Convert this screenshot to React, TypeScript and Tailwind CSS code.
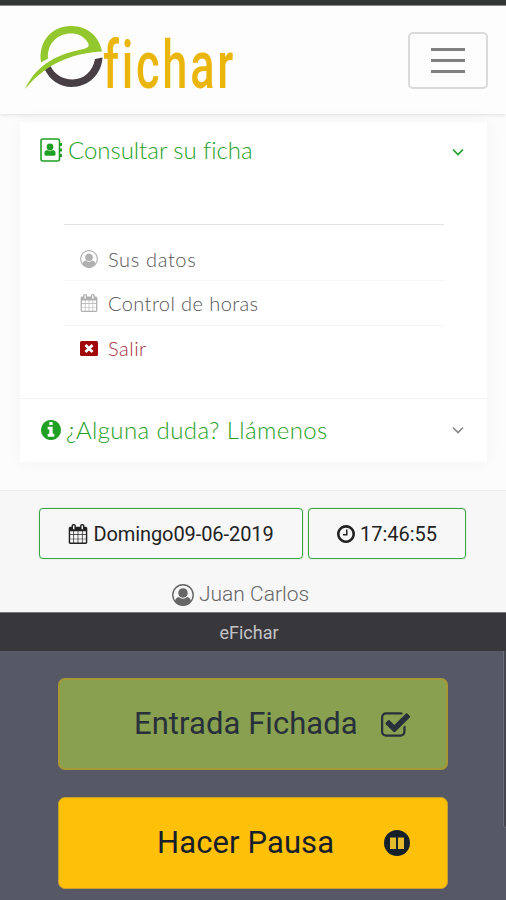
import React from 'react';

interface IconProps {
  className?: string;
}

const CalendarIcon: React.FC<IconProps> = ({ className }) => (
  <svg viewBox="0 0 1792 1792" fill="currentColor" className={className}>
    <path d="M192 1664h288v-288h-288v288zm352 0h320v-288h-320v288zm-352-352h288v-320h-288v320zm352 0h320v-320h-320v320zm-352-384h288v-288h-288v288zm736 736h320v-288h-320v288zm-384-736h320v-288h-320v288zm768 736h288v-288h-288v288zm-384-352h320v-320h-320v320zm-352-864v-288q0-13-9.500-22.500t-22.500-9.500h-64q-13 0-22.500 9.500t-9.500 22.500v288q0 13 9.500 22.500t22.500 9.500h64q13 0 22.500-9.500t9.500-22.500zm736 864h288v-320h-288v320zm-384-384h320v-288h-320v288zm384 0h288v-288h-288v288zm32-480v-288q0-13-9.500-22.500t-22.500-9.500h-64q-13 0-22.500 9.500t-9.500 22.500v288q0 13 9.500 22.500t22.500 9.500h64q13 0 22.500-9.500t9.500-22.500zm384-64v1280q0 52-38 90t-90 38h-1408q-52 0-90-38t-38-90v-1280q0-52 38-90t90-38h128v-96q0-66 47-113t113-47h64q66 0 113 47t47 113v96h384v-96q0-66 47-113t113-47h64q66 0 113 47t47 113v96h128q52 0 90 38t38 90z" />
  </svg>
);

const ClockIcon: React.FC<IconProps> = ({ className }) => (
  <svg viewBox="128 128 1536 1536" fill="currentColor" className={className}>
    <path d="M1024 544v448q0 14-9 23t-23 9h-320q-14 0-23-9t-9-23v-64q0-14 9-23t23-9h224v-352q0-14 9-23t23-9h64q14 0 23 9t9 23zm416 352q0-148-73-273t-198-198-273-73-273 73-198 198-73 273 73 273 198 198 273 73 273-73 198-198 73-273zm224 0q0 209-103 385.500t-279.500 279.500-385.500 103-385.500-103-279.500-279.500-103-385.500 103-385.500 279.500-279.500 385.500-103 385.500 103 279.500 279.500 103 385.500z" />
  </svg>
);

const InfoIcon: React.FC<IconProps> = ({ className }) => (
  <svg viewBox="128 128 1536 1536" fill="currentColor" className={className}>
    <path d="M1152 1376v-160q0-14-9-23t-23-9h-96v-512q0-14-9-23t-23-9h-320q-14 0-23 9t-9 23v160q0 14 9 23t23 9h96v320h-96q-14 0-23 9t-9 23v160q0 14 9 23t23 9h448q14 0 23-9t9-23zm-128-896v-160q0-14-9-23t-23-9h-192q-14 0-23 9t-9 23v160q0 14 9 23t23 9h192q14 0 23-9t9-23zm640 416q0 209-103 385.500t-279.500 279.500-385.500 103-385.500-103-279.500-279.500-103-385.500 103-385.500 279.500-279.500 385.500-103 385.500 103 279.500 279.500 103 385.500z" />
  </svg>
);

const CheckSquareIcon: React.FC<IconProps> = ({ className }) => (
  <svg viewBox="64 128 1664 1408" fill="currentColor" className={className}>
    <path d="M1472 930v318q0 119-84.500 203.500t-203.500 84.500h-832q-119 0-203.500-84.500t-84.500-203.500v-832q0-119 84.500-203.500t203.500-84.500h832q63 0 117 25 15 7 18 23 3 17-9 29l-49 49q-10 10-23 10-3 0-9-2-23-6-45-6h-832q-66 0-113 47t-47 113v832q0 66 47 113t113 47h832q66 0 113-47t47-113v-254q0-13 9-22l64-64q10-10 23-10 6 0 12 3 20 8 20 29zm231-489l-814 814q-24 24-57 24t-57-24l-430-430q-24-24-24-57t24-57l110-110q24-24 57-24t57 24l263 263 647-647q24-24 57-24t57 24l110 110q24 24 24 57t-24 57z" />
  </svg>
);

const UserCircleIcon: React.FC<IconProps> = ({ className }) => (
  <svg viewBox="0 0 28 28" className={className}>
    <circle cx="14" cy="14" r="13" fill="none" stroke="currentColor" strokeWidth="1.800" />
    <path
      d="M14 5.500c3.500 0 6 2.600 6 6s-2.500 6-6 6-6-2.600-6-6 2.500-6 6-6zM9 16.500c1.300 1.400 3 2.200 5 2.200s3.700-.8 5-2.200c3.400.3 4.900 2.800 5.200 5.500C21.800 25.300 18 27.500 14 27.500s-7.800-2.200-10.200-5.500c.3-2.700 1.800-5.200 5.200-5.500z"
      fill="currentColor"
    />
  </svg>
);

const AddressBookIcon: React.FC<IconProps> = ({ className }) => (
  <svg viewBox="0 0 22 24" className={className}>
    <rect x="1" y="1" width="18.500" height="22" rx="2" fill="none" stroke="currentColor" strokeWidth="1.600" />
    <path
      d="M10 5.500a3.400 3.400 0 0 1 3.400 3.400c0 2-1.400 3.700-3.400 3.700s-3.400-1.700-3.400-3.700A3.400 3.400 0 0 1 10 5.500zM7 12c1.800 1.500 4.200 1.500 6 0 2 .3 2.600 2 2.600 4 0 1-.7 1.700-1.700 1.700H6.100c-1 0-1.700-.7-1.700-1.700 0-2 .6-3.700 2.600-4z"
      fill="currentColor"
    />
    <path d="M19.500 5h2.500v3h-2.500zM19.500 10.500h2.500v3h-2.500zM19.500 16h2.500v3h-2.500z" fill="currentColor" />
  </svg>
);

const WindowCloseIcon: React.FC<IconProps> = ({ className }) => (
  <svg viewBox="0 0 18 15" className={className}>
    <rect width="18" height="15" rx="1.500" fill="currentColor" />
    <path d="M5.500 4l7 7M12.500 4l-7 7" stroke="#fff" strokeWidth="2.800" />
  </svg>
);

const PauseCircleIcon: React.FC<IconProps> = ({ className }) => (
  <svg viewBox="0 0 26 26" className={className}>
    <circle cx="13" cy="13" r="13" fill="currentColor" />
    <path d="M6 7.500h6v11.500H6zM14 7.500h6v11.500H14z" fill="#e5bb2b" />
  </svg>
);

const ChevronIcon: React.FC<IconProps> = ({ className }) => (
  <svg viewBox="0 0 12 8" fill="none" stroke="currentColor" strokeWidth="1.600" className={className}>
    <path d="M1 1.500l5 5 5-5" />
  </svg>
);

const Logo = () => (
  <svg viewBox="0 0 230 86" className="h-[86px] w-[230px] overflow-visible" role="img">
    <path d="M20.500 45C26 56.500 36 63 47.500 63 64 63 77.500 51 78.500 33.500L71 35C69 47 60 55.500 48.500 55.500 39 55.500 30.500 50.500 26.500 42z" fill="#483f44" />
    <path
      d="M17 38.500C14 17 28 2 47 2c17 0 28.500 11 31 25.500C55 29 26 35 1 65 7 52 15 44 25 37.500 39 29 51 27 61 24.500c4-1.200 4.500-3.500 2.500-6.500C59.500 12 54 9.500 47 9.500 34 9.500 23 19 24 34.500z"
      fill="#93c72e"
    />
    <text
      x="79"
      y="64"
      textLength="133"
      lengthAdjust="spacingAndGlyphs"
      letterSpacing="4"
      fill="#ebb60b"
      fontFamily="Roboto, sans-serif"
      fontWeight="500"
      fontSize="66"
    >
      fichar
    </text>
  </svg>
);

const Header = () => (
  <header className="flex h-[109px] items-start justify-between border-t border-[#888] bg-[#fdfdfd] pr-[18px] pl-6 shadow-[0_1px_4px_rgba(0,0,0,0.12)]">
    <div className="mt-[18px]">
      <Logo />
    </div>
    <button
      aria-label="Menú"
      className="mt-[26px] flex h-[57px] w-[80px] flex-col items-center justify-center gap-2 rounded-[5px] border-2 border-[#dadada]"
    >
      <span className="h-[3px] w-[34px] bg-[#808080]" />
      <span className="h-[3px] w-[34px] bg-[#808080]" />
      <span className="h-[3px] w-[34px] bg-[#808080]" />
    </button>
  </header>
);

const Menu = () => (
  <nav className="mr-[19px] ml-5 h-[340px] bg-white font-['Lato',sans-serif] font-light shadow-[0_0_18px_rgba(0,0,0,0.04)]">
    <div className="flex h-[55px] items-center pr-[23px] pl-5 text-[#1fa024]">
      <AddressBookIcon className="h-6 w-[22px]" />
      <span className="ml-[6px] text-[24px] tracking-[-0.03px]">Consultar su ficha</span>
      <ChevronIcon className="mt-1 ml-auto h-2 w-3" />
    </div>

    <ul className="mr-[43px] ml-[44px] mt-[47px] h-[174px] border-t border-[#e2e2e2] pt-[12px] text-[20px] text-[#555]">
      <li className="flex h-[44px] items-center border-b border-[#f5f5f5] pl-4">
        <UserCircleIcon className="h-[18px] w-[18px] text-[#b0b0b0]" />
        <span className="ml-[10px] tracking-[0.65px]">Sus datos</span>
      </li>
      <li className="flex h-[45px] items-center border-b border-[#f5f5f5] pl-4">
        <CalendarIcon className="h-[18px] w-[18px] text-[#b0b0b0]" />
        <span className="ml-[10px] tracking-[0.42px]">Control de horas</span>
      </li>
      <li className="flex h-[44px] items-center pl-4 text-[#a62b36]">
        <WindowCloseIcon className="h-[15px] w-[18px] text-[#a20808]" />
        <span className="ml-[10px] tracking-[0.5px]">Salir</span>
      </li>
    </ul>

    <div className="flex h-[62px] items-center border-t border-[#f2f2f2] pr-[23px] pl-[21px] text-[#1fa024]">
      <InfoIcon className="h-5 w-5" />
      <span className="ml-[5px] text-[24px] tracking-[0.42px]">¿Alguna duda? Llámenos</span>
      <ChevronIcon className="ml-auto h-2 w-3 text-[#888]" />
    </div>
  </nav>
);

const Status = () => (
  <section className="h-[122px] border-t border-[#eee] bg-[#f7f7f7] pt-[17px] text-[#222]">
    <div className="flex gap-[5px] pl-[39px] text-[20px]">
      <div className="flex h-[51px] w-[264px] items-center justify-center rounded-[4px] border-[1.500px] border-[#3aa646] shadow-[0_0_1px_#4bae55]">
        <CalendarIcon className="mr-[5px] h-5 w-5" />
        <span className="tracking-[-0.08px]">Domingo09-06-2019</span>
      </div>
      <div className="flex h-[51px] w-[158px] items-center justify-center rounded-[4px] border-[1.500px] border-[#3aa646] shadow-[0_0_1px_#4bae55]">
        <ClockIcon className="mr-[5px] h-[18px] w-[18px]" />
        <span>17:46:55</span>
      </div>
    </div>
    <div className="mt-[20px] ml-[172px] flex items-center text-[21px] font-light text-[#666]">
      <UserCircleIcon className="mr-[5px] h-[22px] w-[22px]" />
      <span>Juan Carlos</span>
    </div>
  </section>
);

const Actions = () => (
  <main className="flex h-[249px] justify-between bg-[#565866]">
    <div className="ml-[58px] w-[390px] pt-[27px] text-[31px]">
      <button className="flex h-[92px] w-full items-center rounded-[7px] border-2 border-[#a89937] bg-[#88a04f] pl-[74px] text-[#28303b]">
        <span className="tracking-[0.06px]">Entrada Fichada</span>
        <CheckSquareIcon className="ml-[23px] h-[25px] w-[29px]" />
      </button>
      <button className="mt-[27px] flex h-[92px] w-full items-center rounded-[7px] border border-[#c9a02a] bg-[#ffc107] pl-[98px] text-[#16202a]">
        <span className="tracking-[0.1px]">Hacer Pausa</span>
        <PauseCircleIcon className="ml-[50px] h-[26px] w-[26px]" />
      </button>
    </div>
    <div className="h-[177px] w-[3px] rounded-bl-[3px] border-b border-l border-[#6b6c78] bg-[#454550]" />
  </main>
);

export default function App() {
  return (
    <div className="h-[900px] w-[506px] overflow-hidden bg-[#fcfcfc] font-['Roboto',sans-serif]">
      <div className="h-[5px] bg-[#343735]" />
      <Header />
      <div className="h-[376px] pt-2">
        <Menu />
      </div>
      <Status />
      <div className="flex h-[39px] items-center justify-center border-t border-[#777] bg-[#38373c] pr-2 text-[18px] text-[#c4c4c6]">
        eFichar
      </div>
      <Actions />
    </div>
  );
}
